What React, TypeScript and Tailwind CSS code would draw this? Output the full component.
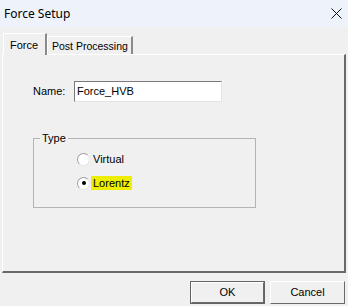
import React from 'react'

function Radio({ label, checked, highlight }: { label: string; checked?: boolean; highlight?: boolean }) {
  return (
    <div className="flex items-center h-[16px]">
      <div className="w-[13px] h-[13px] rounded-full border border-t-[#a0a0a0] border-l-[#a0a0a0] border-b-[#e3e3e3] border-r-[#e3e3e3] bg-white flex items-center justify-center">
        {checked && <div className="w-[4px] h-[4px] rounded-full bg-black" />}
      </div>
      <span className={`ml-[1px] px-[2px] leading-[14px] ${highlight ? 'bg-[#eeee00]' : ''}`}>{label}</span>
    </div>
  )
}

function Button({ label, isDefault }: { label: string; isDefault?: boolean }) {
  return (
    <div className={`w-[75px] h-[23px] ${isDefault ? 'border border-[#646464]' : ''}`}>
      <div className="w-full h-full border border-t-white border-l-white border-b-[#696969] border-r-[#696969] bg-[#f0f0f0] flex items-center justify-center">
        {label}
      </div>
    </div>
  )
}

export default function App() {
  return (
    <div className="w-[348px] h-[306px] bg-[#f0f0f0] text-[11px] text-black overflow-hidden" style={{ fontFamily: '"Liberation Sans", Arial, sans-serif' }}>
      {/* Title bar */}
      <div className="h-[27px] bg-[#eef2fa] flex items-center justify-between pl-[4px] pr-[5px]">
        <span className="text-[12px]" style={{ fontFamily: '"Noto Sans", "Liberation Sans", sans-serif' }}>Force Setup</span>
        <svg width="11" height="11" viewBox="0 0 11 11" className="mr-[1px]">
          <path d="M0.5 0.5 L10.5 10.5 M10.5 0.5 L0.5 10.5" stroke="#111" strokeWidth="1" />
        </svg>
      </div>

      {/* Tabs */}
      <div className="flex items-end h-[21px] mt-[6px] pl-[3px]">
        <div className="relative z-10 -mb-[1px] h-[22px] w-[44px] border-t border-l border-t-white border-l-white border-r-2 border-r-[#8a8a8a] bg-[#f0f0f0] pl-[6px] pt-[3px]">
          Force
        </div>
        <div className="h-[18px] w-[86px] whitespace-nowrap text-[10.5px] border-t border-l border-t-white border-l-white border-r-2 border-r-[#8a8a8a] pl-[4px] pt-[2px]">
          Post Processing
        </div>
      </div>

      {/* Panel */}
      <div className="ml-[2px] w-[344px] h-[219px] border-t border-l border-t-white border-l-white border-r-2 border-b-2 border-r-[#696969] border-b-[#696969] pt-[26px] pl-[30px]">
        <div className="flex items-center">
          <span className="w-[41px]">Name:</span>
          <div className="w-[148px] h-[21px] border border-t-[#7a7a7a] border-l-[#7a7a7a] border-b-[#e3e3e3] border-r-[#e3e3e3] bg-white flex items-center pl-[2px]">
            Force_HVB
          </div>
        </div>

        <fieldset className="mt-[30px] w-[223px] h-[76px] border border-[#b4b4b4] relative">
          <legend className="ml-[6px] px-[2px] leading-[12px]">Type</legend>
          <div className="pl-[43px] pt-[7px] flex flex-col gap-[8px]">
            <Radio label="Virtual" />
            <Radio label="Lorentz" checked highlight />
          </div>
        </fieldset>
      </div>

      {/* Buttons */}
      <div className="flex justify-end gap-[5px] pr-[3px] mt-[8px]">
        <Button label="OK" isDefault />
        <Button label="Cancel" />
      </div>
    </div>
  )
}
